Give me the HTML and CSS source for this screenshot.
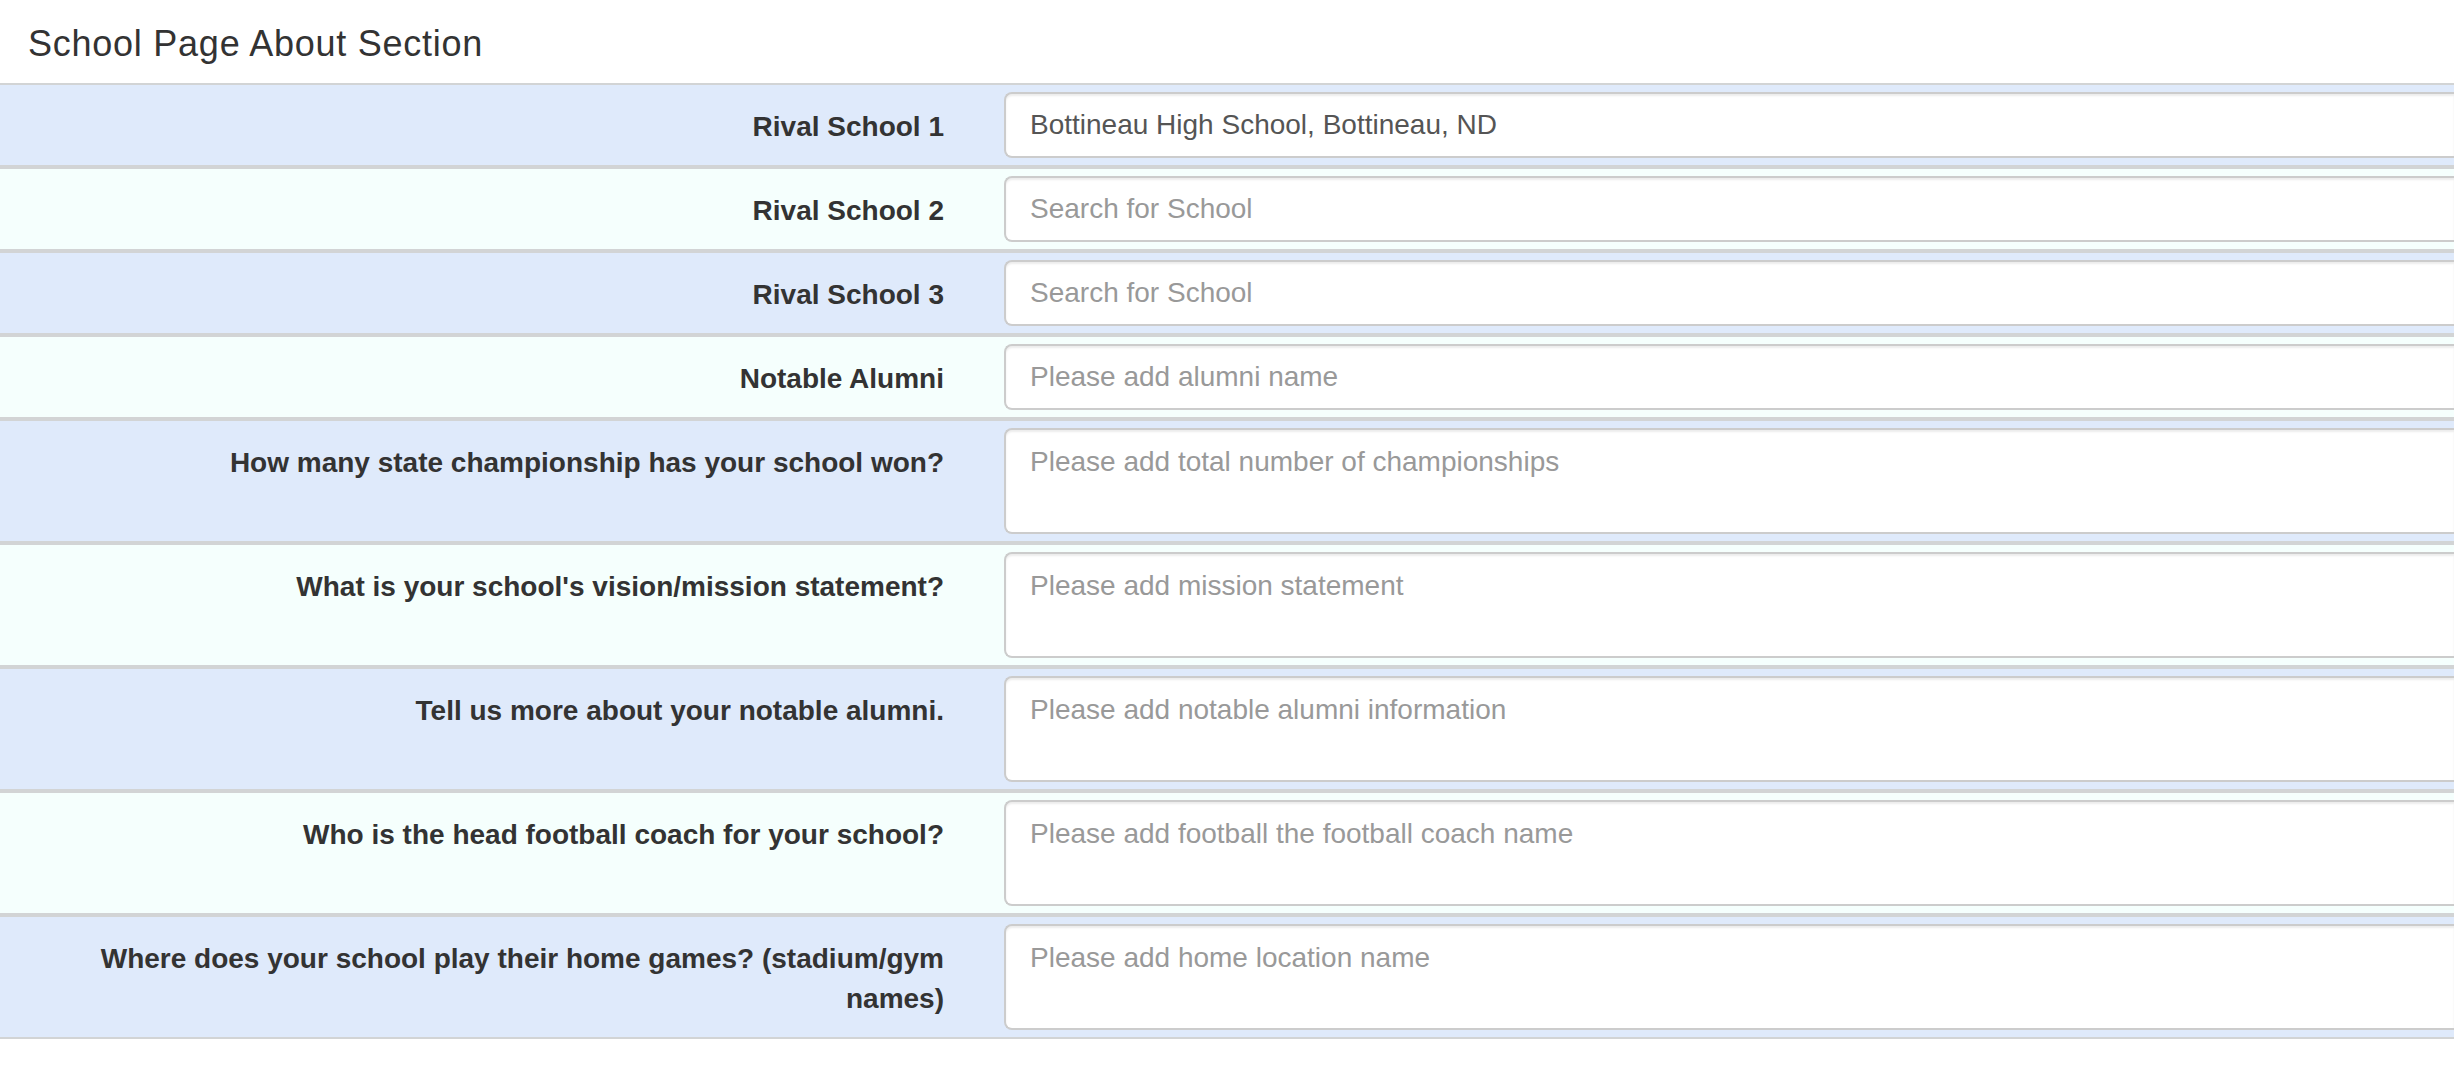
FILE: index.html
```html
<!DOCTYPE html>
<html>
<head>
<meta charset="utf-8">
<title>School Page About Section</title>
<link rel="stylesheet" href="styles.css">
</head>
<body>
<div class="page">
  <div class="header">
    <h1 class="title">School Page About Section</h1>
  </div>
  <form class="form">
    <div class="row row-blue">
      <label class="label">Rival School 1</label>
      <div class="field"><input class="control" type="text" value="Bottineau High School, Bottineau, ND"></div>
    </div>
    <div class="row row-mint">
      <label class="label">Rival School 2</label>
      <div class="field"><input class="control" type="text" placeholder="Search for School"></div>
    </div>
    <div class="row row-blue">
      <label class="label">Rival School 3</label>
      <div class="field"><input class="control" type="text" placeholder="Search for School"></div>
    </div>
    <div class="row row-mint">
      <label class="label">Notable Alumni</label>
      <div class="field"><input class="control" type="text" placeholder="Please add alumni name"></div>
    </div>
    <div class="row row-blue">
      <label class="label">How many state championship has your school won?</label>
      <div class="field"><textarea class="control area" placeholder="Please add total number of championships"></textarea></div>
    </div>
    <div class="row row-mint">
      <label class="label">What is your school's vision/mission statement?</label>
      <div class="field"><textarea class="control area" placeholder="Please add mission statement"></textarea></div>
    </div>
    <div class="row row-blue">
      <label class="label">Tell us more about your notable alumni.</label>
      <div class="field"><textarea class="control area" placeholder="Please add notable alumni information"></textarea></div>
    </div>
    <div class="row row-mint">
      <label class="label">Who is the head football coach for your school?</label>
      <div class="field"><textarea class="control area" placeholder="Please add football the football coach name"></textarea></div>
    </div>
    <div class="row row-blue">
      <label class="label">Where does your school play their home games? (stadium/gym names)</label>
      <div class="field"><textarea class="control area" placeholder="Please add home location name"></textarea></div>
    </div>
  </form>
</div>
</body>
</html>
```
FILE: styles.css
```css
html, body {
  margin: 0;
  padding: 0;
  background: #ffffff;
}

body {
  font-family: "Liberation Sans", Arial, Helvetica, sans-serif;
  font-size: 28px;
  line-height: 40px;
  color: #333333;
}

.header {
  padding: 24px 28px 0;
  margin-bottom: 19px;
}

.title {
  margin: 0;
  font-size: 36px;
  line-height: 40px;
  font-weight: 400;
  letter-spacing: 0.75px;
  color: #333333;
}

.form {
  display: flex;
  flex-direction: column;
}

.row {
  display: grid;
  grid-template-columns: 974px 1fr;
  padding: 7px 0;
  border-top: 2px solid #d2d4d5;
  border-bottom: 2px solid #d2d4d5;
}

.row-blue {
  background: #dfeafb;
}

.row-mint {
  background: #f5fffd;
}

.label {
  padding: 15px 30px 0;
  text-align: right;
  font-weight: 700;
  color: #333333;
}

.field {
  padding: 0 0 0 30px;
}

.control {
  display: block;
  box-sizing: border-box;
  width: 100%;
  height: 66px;
  margin: 0;
  padding: 0 24px;
  font-family: "Liberation Sans", Arial, Helvetica, sans-serif;
  font-size: 28px;
  line-height: 40px;
  color: #555555;
  background: #ffffff;
  border: 2px solid #cccccc;
  border-right: 0;
  border-radius: 8px 0 0 8px;
  box-shadow: inset 0 2px 2px rgba(0, 0, 0, 0.075);
  outline: none;
}

.control::placeholder {
  color: #999999;
  opacity: 1;
}

.area {
  height: 106px;
  padding: 12px 24px;
  resize: none;
  overflow: hidden;
}
```
